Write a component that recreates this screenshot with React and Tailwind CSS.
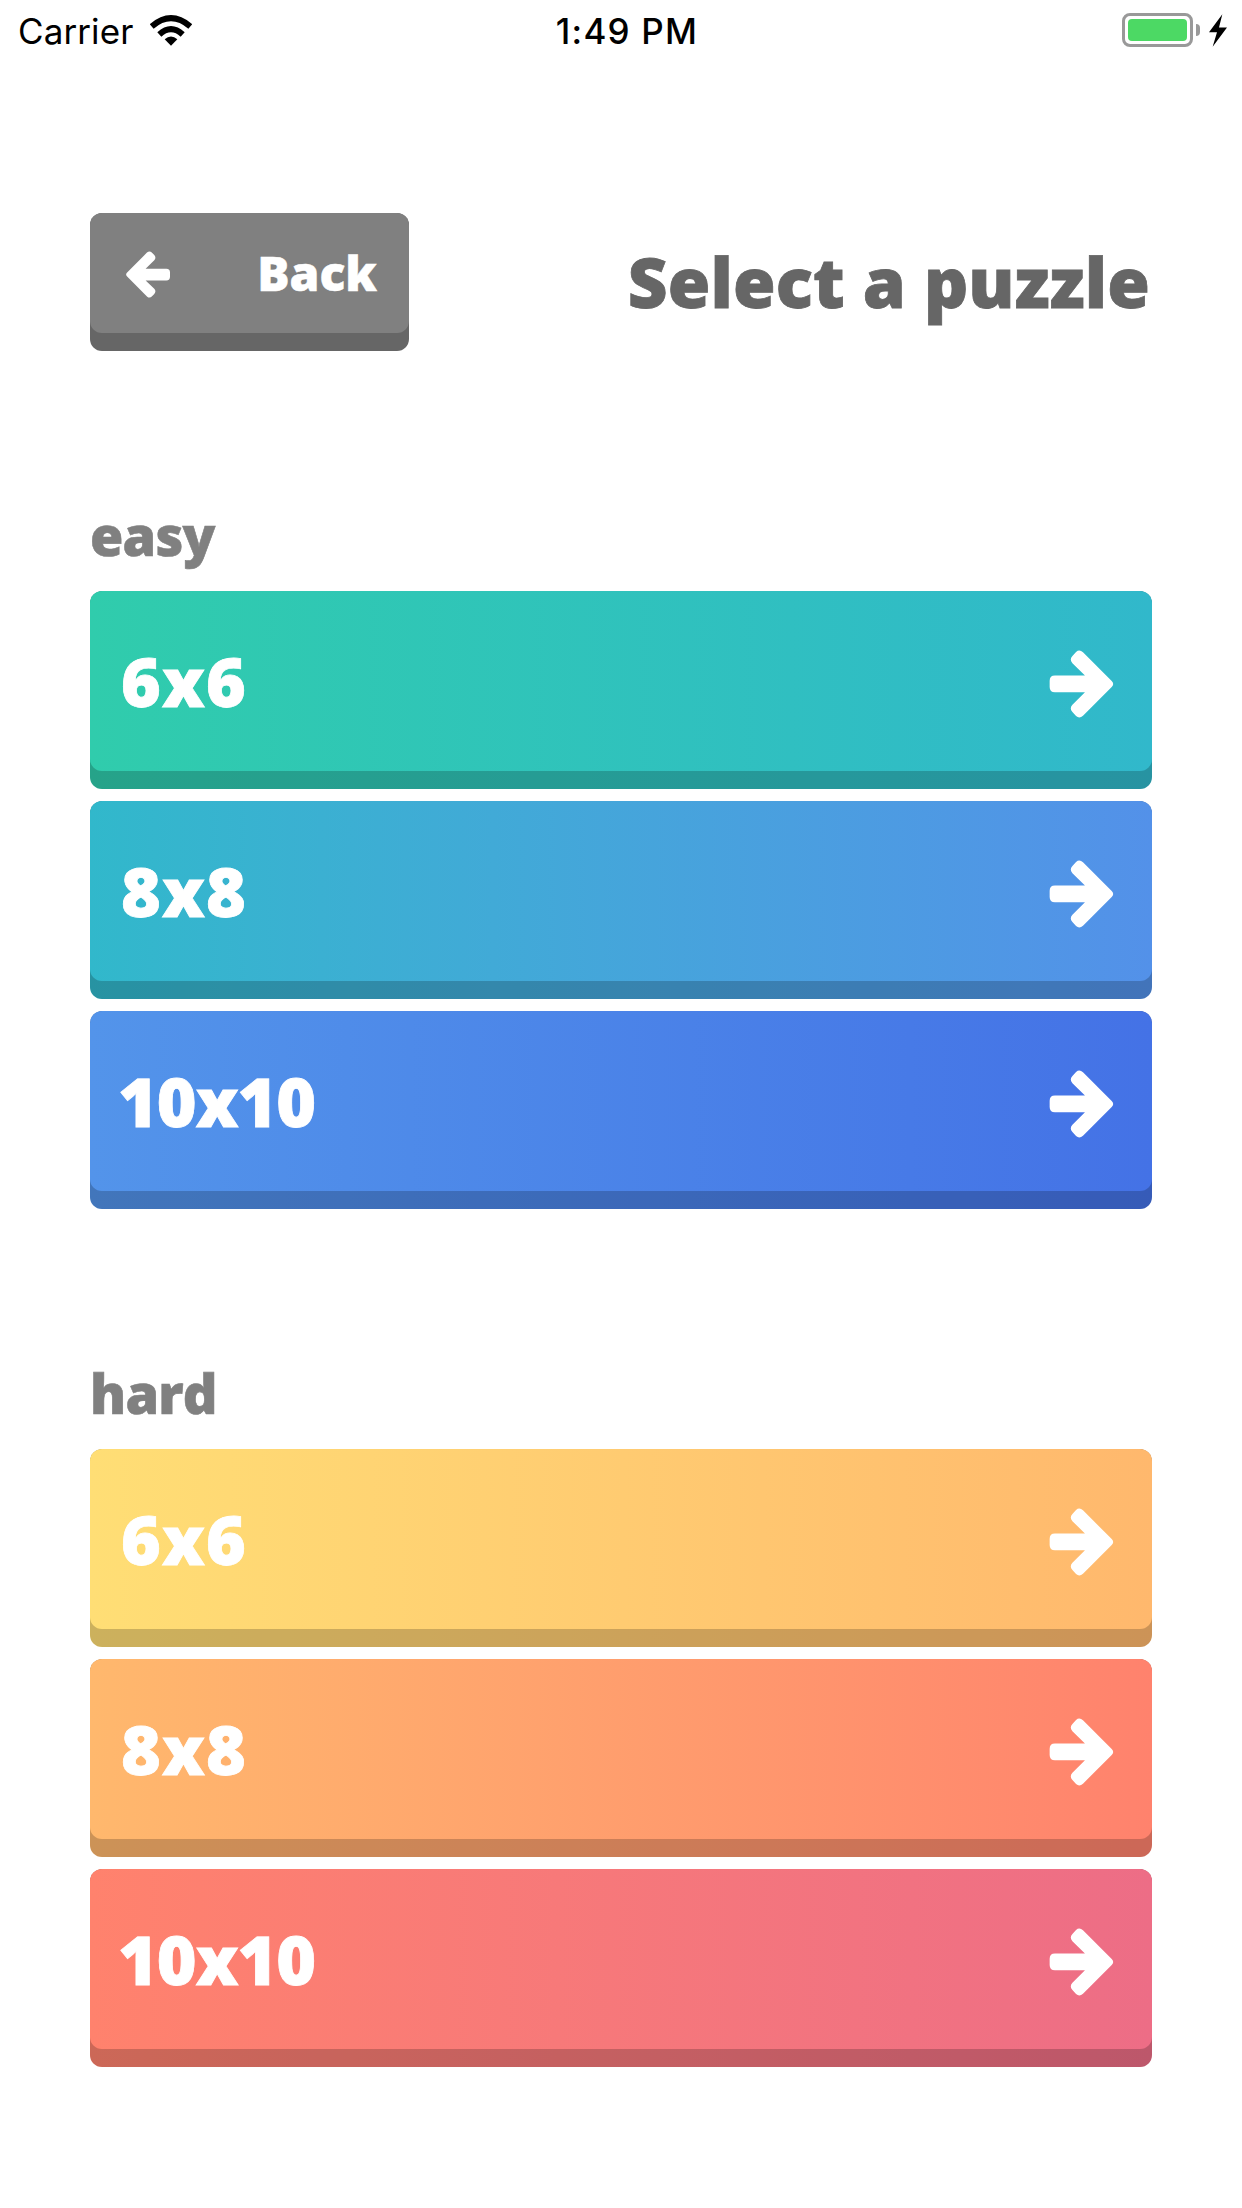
function Arrow({ className }) {
  return (
    <svg viewBox="119 208 193 206" className={className} fill="currentColor" aria-hidden="true">
      <path d="M119 301Q119 285 135 285H226L188 248Q178 237 188 226L199 214Q209 205 220 215L307 302Q316 311 307 320L220 407Q209 417 199 408L188 396Q178 385 188 374L226 336H135Q119 336 119 320Z" />
    </svg>
  );
}

function StatusBar() {
  return (
    <header className="grid h-[61px] grid-cols-3 items-center pl-[18px] pr-[15px] font-['Inter',sans-serif] text-[35px] leading-[62px] text-black">
      <div className="flex items-center">
        <span className="tracking-[0.1px]">Carrier</span>
        <svg viewBox="450 43 126 92" className="-mt-[2px] ml-[17px] h-[31px] w-[42px]" fill="none" aria-hidden="true">
          <path d="M455 77Q513 27 571 77" stroke="#000" strokeWidth="18" />
          <path d="M478 101Q513 69 548 101" stroke="#000" strokeWidth="18" />
          <path d="M494 115Q513 99 532 115L513 135Z" fill="#000" />
        </svg>
      </div>
      <span className="pl-[9px] text-center font-medium tracking-[1.2px]">1:49 PM</span>
      <div className="-mt-[2px] flex items-center justify-end">
        <div className="h-[34px] w-[71px] rounded-[8px] border-3 border-[#999] p-[3px]">
          <div className="h-full rounded-[4px] bg-[#4cd964]" />
        </div>
        <div className="ml-[3px] h-[12px] w-[4px] rounded-r-full bg-[#999]" />
        <svg viewBox="327 42 54 98" className="ml-[9px] h-[33px] w-[18px]" aria-hidden="true">
          <path d="M367 42L327 96H351L338 140L381 82H357Z" />
        </svg>
      </div>
    </header>
  );
}

function PuzzleButton({ label, gradient, spacing }) {
  return (
    <button className={`block h-[198px] w-full overflow-hidden rounded-[12px] text-white ${gradient}`}>
      <div className="h-full bg-black/20">
        <div className={`flex h-[180px] items-center justify-between rounded-[12px] pr-[38px] ${gradient}`}>
          <span className={`text-[68px] leading-none [-webkit-text-stroke:0.8px_currentColor] ${spacing}`}>{label}</span>
          <Arrow className="mt-[5px] h-[68px] w-[65px]" />
        </div>
      </div>
    </button>
  );
}

function Section({ title, items }) {
  return (
    <section>
      <h2 className="h-[91px] text-[54px] leading-[71px] tracking-[-0.8px] text-[#808080] [-webkit-text-stroke:0.6px_currentColor]">
        {title}
      </h2>
      <div className="flex flex-col gap-3">
        {items.map((item) => (
          <PuzzleButton key={item.label} {...item} />
        ))}
      </div>
    </section>
  );
}

const SHORT = "pl-[31px] tracking-[1.2px]";
const LONG = "pl-[28px] tracking-[-1px]";

const easy = [
  { label: "6x6", spacing: SHORT, gradient: "bg-linear-to-r from-[#30ccac] to-[#31b8cb]" },
  { label: "8x8", spacing: SHORT, gradient: "bg-linear-to-r from-[#31b8cb] to-[#5391e9]" },
  { label: "10x10", spacing: LONG, gradient: "bg-linear-to-r from-[#5394ea] to-[#4472e6]" },
];

const hard = [
  { label: "6x6", spacing: SHORT, gradient: "bg-linear-to-r from-[#ffde75] to-[#ffb86d]" },
  { label: "8x8", spacing: SHORT, gradient: "bg-linear-to-r from-[#ffb86d] to-[#ff826d]" },
  { label: "10x10", spacing: LONG, gradient: "bg-linear-to-r from-[#ff826d] to-[#ed6d86]" },
];

export default function App() {
  return (
    <div className="h-[2208px] w-[1242px] overflow-hidden bg-white font-['Open_Sans',sans-serif] font-extrabold">
      <div className="h-[60px] font-normal">
        <StatusBar />
      </div>
      <main className="px-[90px] pt-[153px]">
        <div className="flex h-[138px] items-center justify-between">
          <button className="h-[138px] w-[319px] rounded-[12px] bg-[#666] text-white">
            <div className="-mt-[18px] flex h-[120px] items-center justify-between rounded-[12px] bg-[#808080] pl-[36px] pr-[32px]">
              <Arrow className="mt-[3px] h-[47px] w-[44px] rotate-180" />
              <span className="text-[48px] leading-none [-webkit-text-stroke:0.5px_currentColor]">Back</span>
            </div>
          </button>
          <h1 className="-mt-[2px] pr-[2px] text-[69px] leading-none text-[#666] tracking-[0.1px] [-webkit-text-stroke:0.8px_currentColor]">
            Select a puzzle
          </h1>
        </div>
        <div className="flex flex-col gap-[149px] pt-[149px]">
          <Section title="easy" items={easy} />
          <Section title="hard" items={hard} />
        </div>
      </main>
    </div>
  );
}
